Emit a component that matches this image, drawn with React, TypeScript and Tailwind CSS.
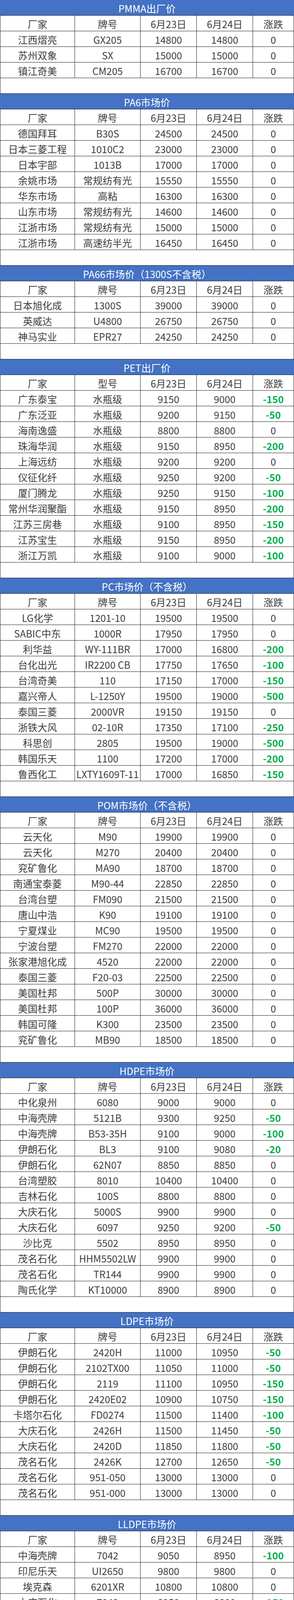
import React from "react";

type Row = [string, string, string, string, string];
type Section = { title: string; head: [string, string]; rows: Row[] };

const S = (title: string, rows: Row[], head: [string, string] = ["厂家", "牌号"]): Section => ({ title, head, rows });

const sections: Section[] = [
  S("PMMA出厂价", [
    ["江西熠亮", "GX205", "14800", "14800", "0"],
    ["苏州双象", "SX", "15000", "15000", "0"],
    ["镇江奇美", "CM205", "16700", "16700", "0"],
  ]),
  S("PA6市场价", [
    ["德国拜耳", "B30S", "24500", "24500", "0"],
    ["日本三菱工程", "1010C2", "23000", "23000", "0"],
    ["日本宇部", "1013B", "17000", "17000", "0"],
    ["余姚市场", "常规纺有光", "15550", "15550", "0"],
    ["华东市场", "高粘", "16300", "16300", "0"],
    ["山东市场", "常规纺有光", "14600", "14600", "0"],
    ["江浙市场", "常规纺有光", "15000", "15000", "0"],
    ["江浙市场", "高速纺半光", "16450", "16450", "0"],
  ]),
  S("PA66市场价（1300S不含税）", [
    ["日本旭化成", "1300S", "39000", "39000", "0"],
    ["英威达", "U4800", "26750", "26750", "0"],
    ["神马实业", "EPR27", "24250", "24250", "0"],
  ]),
  S(
    "PET出厂价",
    [
      ["广东泰宝", "水瓶级", "9150", "9000", "-150"],
      ["广东泛亚", "水瓶级", "9200", "9150", "-50"],
      ["海南逸盛", "水瓶级", "8800", "8800", "0"],
      ["珠海华润", "水瓶级", "9150", "8950", "-200"],
      ["上海远纺", "水瓶级", "9200", "9200", "0"],
      ["仪征化纤", "水瓶级", "9250", "9200", "-50"],
      ["厦门腾龙", "水瓶级", "9250", "9150", "-100"],
      ["常州华润聚酯", "水瓶级", "9150", "8950", "-200"],
      ["江苏三房巷", "水瓶级", "9100", "8950", "-150"],
      ["江苏宝生", "水瓶级", "9150", "8950", "-200"],
      ["浙江万凯", "水瓶级", "9100", "9000", "-100"],
    ],
    ["厂家", "型号"]
  ),
  S("PC市场价（不含税）", [
    ["LG化学", "1201-10", "19500", "19500", "0"],
    ["SABIC中东", "1000R", "17950", "17950", "0"],
    ["利华益", "WY-111BR", "17000", "16800", "-200"],
    ["台化出光", "IR2200 CB", "17750", "17650", "-100"],
    ["台湾奇美", "110", "17150", "17000", "-150"],
    ["嘉兴帝人", "L-1250Y", "19500", "19000", "-500"],
    ["泰国三菱", "2000VR", "19150", "19150", "0"],
    ["浙铁大风", "02-10R", "17350", "17100", "-250"],
    ["科思创", "2805", "19500", "19000", "-500"],
    ["韩国乐天", "1100", "17200", "17000", "-200"],
    ["鲁西化工", "LXTY1609T-11", "17000", "16850", "-150"],
  ]),
  S("POM市场价（不含税）", [
    ["云天化", "M90", "19900", "19900", "0"],
    ["云天化", "M270", "20400", "20400", "0"],
    ["兖矿鲁化", "MA90", "18700", "18700", "0"],
    ["南通宝泰菱", "M90-44", "22850", "22850", "0"],
    ["台湾台塑", "FM090", "21500", "21500", "0"],
    ["唐山中浩", "K90", "19100", "19100", "0"],
    ["宁夏煤业", "MC90", "19500", "19500", "0"],
    ["宁波台塑", "FM270", "22000", "22000", "0"],
    ["张家港旭化成", "4520", "22000", "22000", "0"],
    ["泰国三菱", "F20-03", "22500", "22500", "0"],
    ["美国杜邦", "500P", "30000", "30000", "0"],
    ["美国杜邦", "100P", "36000", "36000", "0"],
    ["韩国可隆", "K300", "23500", "23500", "0"],
    ["兖矿鲁化", "MB90", "18500", "18500", "0"],
  ]),
  S("HDPE市场价", [
    ["中化泉州", "6080", "9000", "9000", "0"],
    ["中海壳牌", "5121B", "9300", "9250", "-50"],
    ["中海壳牌", "B53-35H", "9100", "9000", "-100"],
    ["伊朗石化", "BL3", "9100", "9080", "-20"],
    ["伊朗石化", "62N07", "8850", "8850", "0"],
    ["台湾塑胶", "8010", "10400", "10400", "0"],
    ["吉林石化", "100S", "8800", "8800", "0"],
    ["大庆石化", "5000S", "9900", "9900", "0"],
    ["大庆石化", "6097", "9250", "9200", "-50"],
    ["沙比克", "5502", "8950", "8950", "0"],
    ["茂名石化", "HHM5502LW", "9900", "9900", "0"],
    ["茂名石化", "TR144", "9900", "9900", "0"],
    ["陶氏化学", "KT10000", "8900", "8900", "0"],
  ]),
  S("LDPE市场价", [
    ["伊朗石化", "2420H", "11000", "10950", "-50"],
    ["伊朗石化", "2102TX00", "11050", "11000", "-50"],
    ["伊朗石化", "2119", "11100", "10950", "-150"],
    ["伊朗石化", "2420E02", "10900", "10750", "-150"],
    ["卡塔尔石化", "FD0274", "11500", "11400", "-100"],
    ["大庆石化", "2426H", "11500", "11450", "-50"],
    ["大庆石化", "2420D", "11850", "11800", "-50"],
    ["茂名石化", "2426K", "12700", "12650", "-50"],
    ["茂名石化", "951-050", "13000", "13000", "0"],
    ["茂名石化", "951-000", "13000", "13000", "0"],
  ]),
  S("LLDPE市场价", [
    ["中海壳牌", "7042", "9050", "8950", "-100"],
    ["印尼乐天", "UI2650", "9800", "9800", "0"],
    ["埃克森", "6201XR", "10800", "10800", "0"],
    ["大庆石化", "7042", "8950", "8800", "-150"],
    ["广州石化", "7042", "9100", "9100", "0"],
    ["广州石化", "2001", "9100", "9000", "-100"],
    ["抚顺石化", "7042", "8950", "8900", "-50"],
    ["沙比克", "218WJ", "9300", "9280", "-20"],
    ["泰国PTT", "7420D", "9600", "9600", "0"],
    ["茂名石化", "7042", "9800", "9800", "0"],
    ["阿联酋博禄化工", "FB2230", "11300", "11300", "0"],
  ]),
  S("GPPS市场价", [
    ["上海赛科", "123P", "10550", "10530", "-20"],
    ["台湾台化", "5250", "11800", "11800", "0"],
    ["宁波台化", "5250", "10280", "10280", "0"],
    ["广州石化", "525", "10950", "11000", "50"],
    ["泰国石化", "GP150", "10400", "10400", "0"],
    ["镇江奇美", "PG-33", "10720", "10680", "-40"],
    ["广东星辉", "SKG-118", "10310", "10260", "-50"],
    ["惠州仁信", "525B", "10250", "10180", "-70"],
    ["福建天原", "635", "10180", "10150", "-30"],
    ["香港石化", "1841H", "10180", "10100", "-80"],
  ]),
  S("HIPS市场价", [
    ["上海赛科", "622P", "10830", "10800", "-30"],
    ["台湾台化", "8250", "11540", "11520", "-20"],
    ["宁波台化", "8250", "11370", "11360", "-10"],
    ["广州石化", "660", "10630", "10600", "-30"],
    ["泰国石化", "HI650", "11250", "11220", "-30"],
    ["镇江奇美", "PH-88", "11350", "11350", "0"],
    ["广东星辉", "SKH-127", "10700", "10620", "-80"],
    ["香港石化", "SR600", "10750", "10750", "0"],
    ["湛江新中美", "990", "10650", "10550", "-100"],
  ]),
  S("ABS市场价（不含税）", [
    ["台湾台化", "15A1", "13000", "12500", "-500"],
    ["台湾奇美", "757", "13700", "13700", "0"],
    ["吉林石化", "0215A", "11700", "11550", "-150"],
    ["大庆石化", "750A", "11800", "11800", "0"],
    ["天津大沽", "DG417", "11700", "11700", "0"],
    ["宁波LG甬兴", "121H", "11500", "11450", "-50"],
    ["宁波台化", "AG15A1", "12000", "11970", "-30"],
    ["宁波台化", "AG15E1", "11850", "11800", "-50"],
    ["镇江奇美", "PA-757K", "11900", "11850", "-50"],
    ["镇江奇美", "PA-707K", "11880", "11840", "-40"],
    ["韩国巴斯夫", "GP-22", "13200", "13200", "0"],
  ]),
  S("PP市场价", [
    ["大庆炼化", "T30S", "8750", "8750", "0"],
    ["抚顺石化", "Z30S", "8700", "8650", "-50"],
    ["中景石化", "V30G", "8700", "8680", "-20"],
    ["独山子石化", "K8003", "9250", "9180", "-70"],
    ["大庆炼化", "EPS30R", "9100", "9100", "0"],
    ["北海炼厂", "PPH-MN60", "9000", "8950", "-50"],
    ["宁夏煤业", "1100N", "8700", "8630", "-70"],
    ["延长中煤", "L5E89", "8650", "8500", "-150"],
    ["万华化学", "456J", "8650", "8550", "-100"],
    ["宁夏煤业", "2500H", "8880", "8850", "-30"],
  ]),
  S(
    "EPS市场价",
    [
      ["华南市场", "普通料", "11650", "11650", "0"],
      ["华南市场", "阻燃料", "12650", "12650", "0"],
      ["江苏市场", "普通料", "11500", "11500", "0"],
      ["江苏市场", "阻燃料", "12400", "12400", "0"],
      ["山东市场", "普通料", "11175", "11175", "0"],
      ["山东市场", "阻燃料", "12050", "12050", "0"],
    ],
    ["地区", "型号"]
  ),
  S("PVC出厂价", [
    ["宁夏英力特", "SG-3", "7600", "7600", "0"],
    ["河南联创", "SG-3", "7850", "7700", "-150"],
    ["内蒙三联", "SG-5", "8050", "7450", "-600"],
    ["新疆中泰", "SG-5", "7500", "7300", "-200"],
    ["陕西北元", "SG-5", "7650", "7400", "-250"],
    ["内蒙君正", "SG-5", "7500", "7500", "0"],
    ["四川金路", "SG-5", "7900", "7650", "-250"],
    ["宜宾天原", "SG-5", "7900", "7700", "-200"],
    ["德州实华", "SG-8", "7950", "7750", "-200"],
    ["陕西北元", "SG-8", "7800", "7550", "-250"],
  ]),
  S("EVA市场价", [
    ["台湾台塑", "7470M", "29000", "29000", "0"],
    ["燕山石化", "18J3", "23000", "23000", "0"],
    ["台湾塑胶", "7350M", "26200", "26100", "-100"],
    ["台湾聚合", "3330", "30000", "30000", "0"],
    ["扬子巴斯夫", "6110M", "29000", "28900", "-100"],
    ["扬子巴斯夫", "5110J", "26000", "25800", "-200"],
    ["江苏斯尔邦", "V6020M", "28600", "28500", "-100"],
    ["韩国韩华", "2518", "24000", "23600", "-400"],
  ]),
];

const rowCls =
  "grid grid-cols-[191px_168px_144px_144px_105px] h-[40px] overflow-hidden border-l border-b border-[#1f1f1f]";
const cellCls =
  "flex items-center justify-center h-full pt-[3px] border-r border-[#1f1f1f] whitespace-nowrap";

function ChangeCell({ v }: { v: string }) {
  let cls = "text-[#404040]";
  if (v.startsWith("-")) cls = "text-[#00B050] font-bold";
  else if (v !== "0") cls = "text-[#FF0000] font-bold";
  return <div className={`${cellCls} ${cls}`}>{v}</div>;
}

function Table({ s, first }: { s: Section; first: boolean }) {
  return (
    <div>
      {!first && <div className="h-[40px] border-x border-b border-[#1f1f1f] bg-white" />}
      <div className="h-[40px] overflow-hidden pt-[3px] bg-[#4472C4] text-white flex items-center justify-center border-b border-[#1f1f1f]">
        {s.title}
      </div>
      <div className={rowCls}>
        <div className={cellCls}>{s.head[0]}</div>
        <div className={cellCls}>{s.head[1]}</div>
        <div className={cellCls}>6月23日</div>
        <div className={cellCls}>6月24日</div>
        <div className={cellCls}>涨跌</div>
      </div>
      {s.rows.map((r, i) => (
        <div key={i} className={rowCls}>
          <div className={cellCls}>{r[0]}</div>
          <div className={cellCls}>{r[1]}</div>
          <div className={cellCls}>{r[2]}</div>
          <div className={cellCls}>{r[3]}</div>
          <ChangeCell v={r[4]} />
        </div>
      ))}
    </div>
  );
}

export default function App() {
  return (
    <div className="w-[753px] bg-white text-[#404040] text-[25px] leading-[30px] font-['Noto_Sans_CJK_SC','Noto_Sans',sans-serif]">
      {sections.map((s, i) => (
        <Table key={i} s={s} first={i === 0} />
      ))}
      <div className="h-[40px] overflow-hidden pt-[3px] border-x border-b border-[#1f1f1f] flex items-center justify-center">
        注：ABS、PC、POM、PA66（1300S）不含税
      </div>
    </div>
  );
}
